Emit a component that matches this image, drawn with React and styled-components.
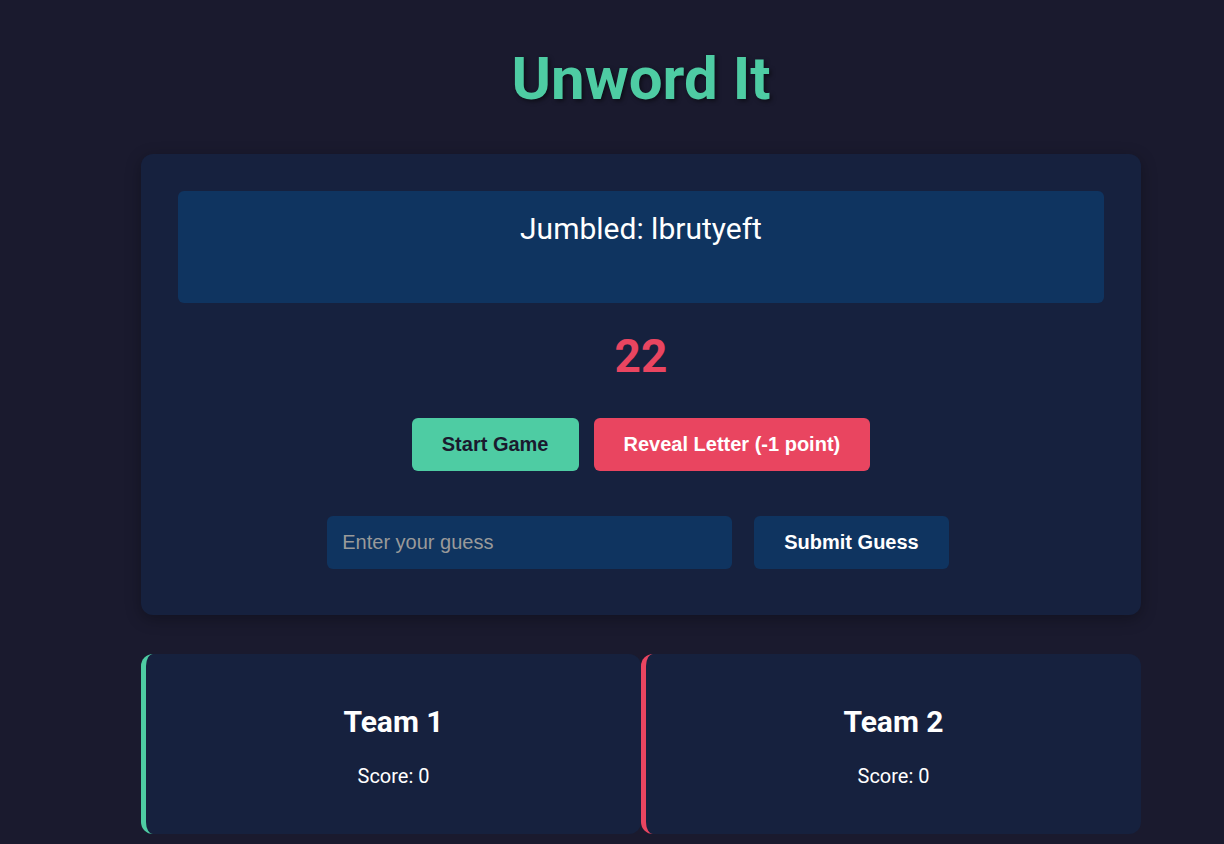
import React from 'react';
import styled, { createGlobalStyle } from 'styled-components';

const GlobalStyle = createGlobalStyle`
  html, body {
    margin: 0;
    padding: 0;
    background-color: #1a1a2e;
  }

  body {
    font-family: Roboto, 'Liberation Sans', sans-serif;
    color: #fff;
    min-height: 844px;
  }
`;

const Page = styled.div`
  padding: 43px 0 0 58px;
`;

const Wrapper = styled.main`
  width: 1000px;
  margin: 0 auto;
`;

const Title = styled.h1`
  margin: 0 0 39px;
  font-size: 60px;
  line-height: 72px;
  font-weight: 700;
  text-align: center;
  color: #4ecca3;
  text-shadow: 2px 2px 4px rgba(0, 0, 0, 0.5);
`;

const GameCard = styled.section`
  background-color: #16213e;
  border-radius: 12px;
  padding: 37px 37px 46px;
  box-shadow: 0 4px 16px rgba(0, 0, 0, 0.3);
`;

const WordDisplay = styled.div`
  box-sizing: border-box;
  height: 112px;
  padding: 20px;
  background-color: #0f3460;
  border-radius: 6px;
  font-size: 30px;
  line-height: 1.2;
  text-align: center;
`;

const Timer = styled.div`
  margin-top: 27px;
  font-size: 46px;
  line-height: 53px;
  font-weight: 700;
  text-align: center;
  color: #e94560;
`;

const Row = styled.div`
  display: flex;
  justify-content: center;
  gap: ${({ $gap }) => $gap}px;
  margin-top: ${({ $top }) => $top}px;
  padding-right: ${({ $offset = 0 }) => $offset}px;
`;

const Button = styled.button`
  height: 53px;
  padding: 0 30px;
  border: none;
  border-radius: 6px;
  font-family: 'Liberation Sans', Arial, sans-serif;
  font-size: 20px;
  font-weight: 700;
  cursor: pointer;
  background-color: ${({ $variant }) =>
    $variant === 'green' ? '#4ecca3' : $variant === 'red' ? '#e94560' : '#0f3460'};
  color: ${({ $variant }) => ($variant === 'green' ? '#1a1a2e' : '#fff')};
`;

const GuessInput = styled.input`
  box-sizing: border-box;
  width: 405px;
  height: 53px;
  padding: 0 15px;
  border: none;
  border-radius: 6px;
  background-color: #0f3460;
  color: #fff;
  font-family: 'Liberation Sans', Arial, sans-serif;
  font-size: 20px;
  outline: none;

  &::placeholder {
    color: #9a9a9a;
  }
`;

const Teams = styled.div`
  display: grid;
  grid-template-columns: 1fr 1fr;
  margin-top: 39px;
`;

const TeamCard = styled.div`
  box-sizing: border-box;
  height: 180px;
  padding-top: 50px;
  background-color: #16213e;
  border-radius: 12px;
  border-left: 5px solid ${({ $color }) => $color};
  text-align: center;
`;

const TeamName = styled.h2`
  margin: 0;
  font-size: 30px;
  line-height: 36px;
  font-weight: 700;
`;

const Score = styled.p`
  margin: 25px 0 0;
  font-size: 20px;
  line-height: 23px;
`;

const App = () => (
  <Page>
    <GlobalStyle />
    <Wrapper>
      <Title>Unword It</Title>

      <GameCard>
        <WordDisplay>Jumbled: lbrutyeft</WordDisplay>
        <Timer>22</Timer>

        <Row $gap={15} $top={35}>
          <Button $variant="green">Start Game</Button>
          <Button $variant="red">Reveal Letter (-1 point)</Button>
        </Row>

        <Row $gap={22} $top={45} $offset={6}>
          <GuessInput placeholder="Enter your guess" />
          <Button>Submit Guess</Button>
        </Row>
      </GameCard>

      <Teams>
        <TeamCard $color="#4ecca3">
          <TeamName>Team 1</TeamName>
          <Score>Score: 0</Score>
        </TeamCard>
        <TeamCard $color="#e94560">
          <TeamName>Team 2</TeamName>
          <Score>Score: 0</Score>
        </TeamCard>
      </Teams>
    </Wrapper>
  </Page>
);

export default App;
